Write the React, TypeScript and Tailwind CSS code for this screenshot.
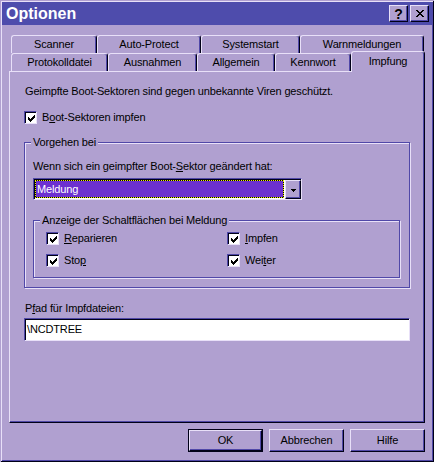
import React from "react";

type TabDef = { label: string; w: string; active?: boolean };

const backRow: TabDef[] = [
  { label: "Scanner", w: "w-[86px]" },
  { label: "Auto-Protect", w: "w-[104px]" },
  { label: "Systemstart", w: "w-[99px]" },
  { label: "Warnmeldungen", w: "w-[124px]" },
];

const frontRow: TabDef[] = [
  { label: "Protokolldatei", w: "w-[97px]" },
  { label: "Ausnahmen", w: "w-[89px]" },
  { label: "Allgemein", w: "w-[78px]" },
  { label: "Kennwort", w: "w-[76px]" },
  { label: "Impfung", w: "w-[74px]", active: true },
];

// pixel glyphs, one string per row
const CHECK = ["......X", ".....XX", "X...XXX", "XX.XXX.", "XXXXX..", ".XXX...", "..X...."];
const CROSS = ["XX....XX", ".XX..XX.", "..XXXX..", "...XX...", "..XXXX..", ".XX..XX.", "XX....XX"];
const ARROW = ["XXXXXXX", ".XXXXX.", "..XXX..", "...X..."];

function Pixels({ rows }: { rows: string[] }) {
  const w = rows[0].length;
  const h = rows.length;
  return (
    <svg width={w} height={h} viewBox={`0 0 ${w} ${h}`} shapeRendering="crispEdges">
      {rows.flatMap((r, y) =>
        [...r].map((c, x) =>
          c === "X" ? <rect key={`${x}-${y}`} x={x} y={y} width="1" height="1" fill="#000" /> : null
        )
      )}
    </svg>
  );
}

function Tab({ label, w, active }: TabDef) {
  return (
    <div
      className={
        "flex shrink-0 items-center justify-center rounded-t-[3px] border-t border-r border-l border-t-[#e8e0f8] border-r-[#000018] border-l-[#e8e0f8] bg-[#b0a0d0] shadow-[inset_-1px_0_0_#5048a8] " +
        w +
        (active ? " relative z-10 -mt-[2px] h-[21px] pb-[2px]" : " h-[18px]")
      }
    >
      {label}
    </div>
  );
}

function CheckBox({ children }: { children: React.ReactNode }) {
  return (
    <div className="flex h-[13px] items-center gap-[5px]">
      <span className="flex h-[13px] w-[13px] shrink-0 items-center justify-center border border-t-[#5048a8] border-r-[#e8e0f8] border-b-[#e8e0f8] border-l-[#5048a8] bg-white shadow-[inset_1px_1px_0_#000018]">
        <span className="mt-[1px] ml-[1px] flex">
          <Pixels rows={CHECK} />
        </span>
      </span>
      <span>{children}</span>
    </div>
  );
}

function Group({ label, className, children }: { label: string; className: string; children: React.ReactNode }) {
  return (
    <div className={"relative border border-[#5048a8] shadow-[inset_1px_1px_0_#e8e0f8,1px_1px_0_#e8e0f8] " + className}>
      <span className="absolute top-[-7px] left-[6px] bg-[#b0a0d0] px-[2px] leading-[13px]">{label}</span>
      {children}
    </div>
  );
}

function PushButton({ label, isDefault }: { label: string; isDefault?: boolean }) {
  const face = (
    <div className="flex h-full w-full items-center justify-center border border-t-[#e8e0f8] border-r-[#000018] border-b-[#000018] border-l-[#e8e0f8] bg-[#b0a0d0] shadow-[inset_-1px_-1px_0_#5048a8]">
      {label}
    </div>
  );
  return isDefault ? (
    <div className="h-[23px] w-[75px] border border-[#000018]">{face}</div>
  ) : (
    <div className="h-[23px] w-[75px]">{face}</div>
  );
}

export default function App() {
  return (
    <div className="flex h-[462px] w-[434px] flex-col bg-[#b0a0d0] p-[2px] font-['Liberation_Sans',Arial,sans-serif] text-[11px] leading-[13px] tracking-[-0.15px] text-black shadow-[inset_1px_1px_0_#b0a0d0,inset_-1px_-1px_0_#000018,inset_2px_2px_0_#e8e0f8,inset_-2px_-2px_0_#5048a8]">
      {/* caption */}
      <div className="flex h-[23px] shrink-0 items-center justify-between bg-[#4e4cac] pr-[3px] pl-[4px]">
        <span className="text-[16px] leading-[20px] font-bold tracking-normal text-white">Optionen</span>
        <div className="flex gap-[2px]">
          <div className="flex h-[17px] w-[19px] items-center justify-center border border-t-[#e8e0f8] border-r-[#000018] border-b-[#000018] border-l-[#e8e0f8] bg-[#b0a0d0] text-[14px] leading-none font-bold shadow-[inset_-1px_-1px_0_#5048a8]">
            ?
          </div>
          <div className="flex h-[17px] w-[19px] items-center justify-center border border-t-[#e8e0f8] border-r-[#000018] border-b-[#000018] border-l-[#e8e0f8] bg-[#b0a0d0] shadow-[inset_-1px_-1px_0_#5048a8]">
            <Pixels rows={CROSS} />
          </div>
        </div>
      </div>

      {/* tab strip */}
      <div className="mt-[10px] ml-[9px] flex h-[18px] items-start">
        {backRow.map((t) => (
          <Tab key={t.label} {...t} />
        ))}
      </div>
      <div className="ml-[9px] flex h-[18px] items-start">
        {frontRow.map((t) => (
          <Tab key={t.label} {...t} />
        ))}
      </div>

      {/* page */}
      <div className="ml-[7px] flex h-[352px] w-[416px] shrink-0 flex-col border border-t-[#e8e0f8] border-r-[#000018] border-b-[#000018] border-l-[#e8e0f8] pt-[13px] pl-[14px] shadow-[inset_-1px_-1px_0_#5048a8]">
        <p className="pl-[1px]">Geimpfte Boot-Sektoren sind gegen unbekannte Viren geschützt.</p>
        <div className="mt-[13px]">
          <CheckBox>
            B<u>o</u>ot-Sektoren impfen
          </CheckBox>
        </div>

        <Group label="Vorgehen bei" className="mt-[18px] w-[386px] pt-[17px] pb-[9px] pl-[8px]">
          <p>
            Wenn sich ein geimpfter Boot-<u>S</u>ektor geändert hat:
          </p>
          <div className="mt-[5px] flex h-[22px] w-[269px] border border-t-[#5048a8] border-r-[#e8e0f8] border-b-[#e8e0f8] border-l-[#5048a8] bg-white pt-[1px] pl-[1px] shadow-[inset_1px_1px_0_#000018]">
            <div className="mr-[1px] mb-[1px] flex flex-1 bg-black">
              <div className="flex flex-1 items-center border border-dotted border-[#f0f000] bg-[#6c30d0] bg-clip-padding pl-[1px] text-white">
                Meldung
              </div>
            </div>
            <div className="flex w-[16px] items-center justify-center border border-t-[#e8e0f8] border-r-[#000018] border-b-[#000018] border-l-[#e8e0f8] bg-[#b0a0d0] pt-[1px] shadow-[inset_-1px_-1px_0_#5048a8]">
              <Pixels rows={ARROW.slice(1)} />
            </div>
          </div>

          <Group label="Anzeige der Schaltflächen bei Meldung" className="mt-[20px] w-[367px] pt-[11px] pb-[10px] pl-[12px]">
            <div className="grid grid-cols-[181px_1fr] gap-y-[9px]">
              <CheckBox>
                <u>R</u>eparieren
              </CheckBox>
              <CheckBox>
                <u>I</u>mpfen
              </CheckBox>
              <CheckBox>
                Sto<u>p</u>
              </CheckBox>
              <CheckBox>
                Wei<u>t</u>er
              </CheckBox>
            </div>
          </Group>
        </Group>

        <p className="mt-[14px] pl-[1px]">
          P<u>f</u>ad für Impfdateien:
        </p>
        <div className="mt-[3px] flex h-[23px] w-[386px] items-center border border-t-[#5048a8] border-r-[#e8e0f8] border-b-[#e8e0f8] border-l-[#5048a8] bg-white pl-[2px] shadow-[inset_1px_1px_0_#000018]">
          {"\\NCDTREE"}
        </div>
      </div>

      {/* dialog buttons */}
      <div className="mt-[6px] ml-[7px] flex w-[416px] justify-end gap-[6px]">
        <PushButton label="OK" isDefault />
        <PushButton label="Abbrechen" />
        <PushButton label="Hilfe" />
      </div>
    </div>
  );
}
